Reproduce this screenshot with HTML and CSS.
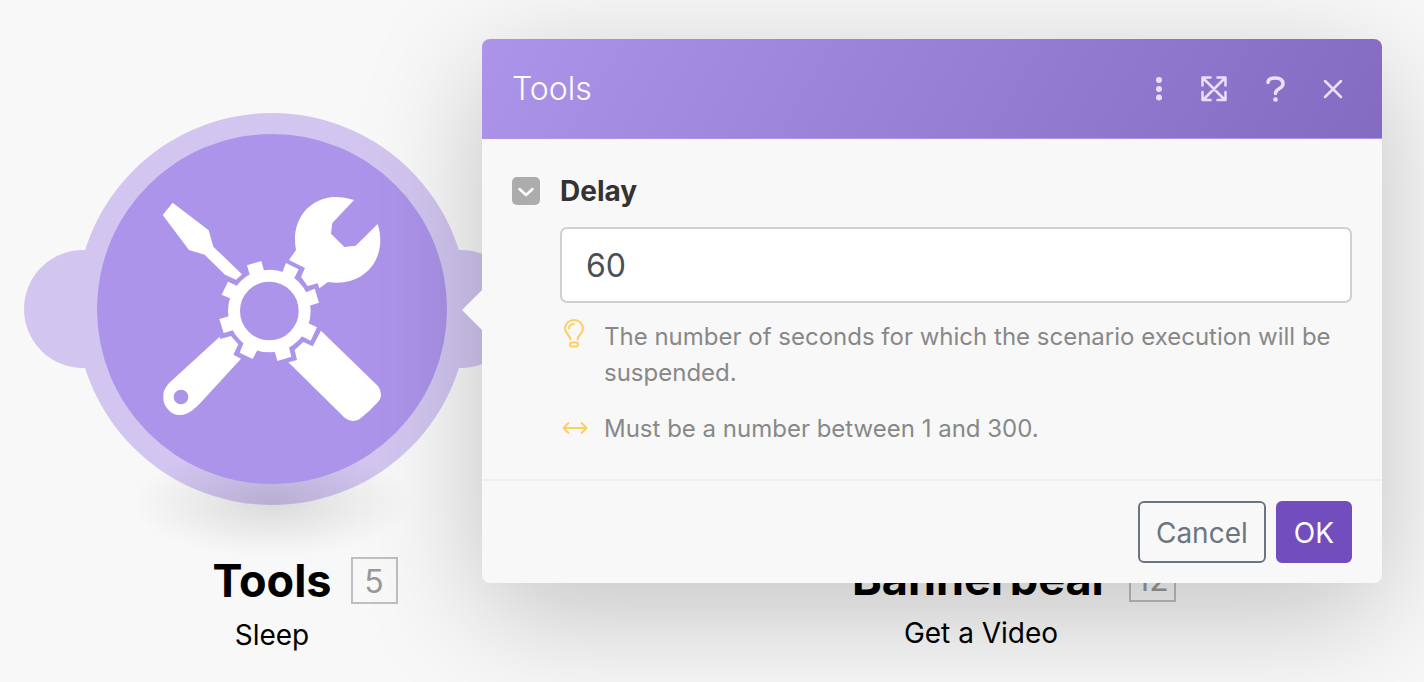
FILE: index.html
```
<!DOCTYPE html>
<html lang="en">
<head>
    <meta charset="UTF-8">
    <meta name="viewport" content="width=device-width, initial-scale=1.0">
    <title>Scenario - Tools</title>
    <link rel="stylesheet" href="styles.css">
</head>
<body>
    <main class="canvas">
        <div class="node node-tools">
            <div class="node-shape">
                <span class="ear ear-left"></span>
                <span class="ear ear-right"></span>
                <div class="node-ring">
                    <span class="node-shadow"></span>
                    <div class="node-circle">
                        <svg class="node-icon" viewBox="6 -3 780 780" aria-hidden="true">
                            <!-- screwdriver -->
                            <path d="M98 68L206 151L220 200L306 283L288 299L255 284L194 224L147 210L68 105Z"/>
                            <!-- wrench -->
                            <path d="M642 60C608 50 577 48 552 56C498 72 465 120 465 177Q465 195 468 210L447 240L495 264L483 290L503 318L533 310L538 325L564 306C600 312 640 306 672 282C716 250 732 190 713 132L647 197L613 201L573 161L577 129Z"/>
                            <!-- spanner handle -->
                            <path fill-rule="evenodd" d="M239 470L241 477L273 468L295 493L280 524L303 536L190 659C165 686 145 705 120 705C104 705 95 700 86 690C74 678 70 666 70 650C70 630 78 618 94 603ZM123 629A22 22 0 1 0 123 673A22 22 0 1 0 123 629Z"/>
                            <!-- screwdriver handle -->
                            <path d="M543 452L713 617Q723 629 723 647Q722 658 714 666Q690 693 658 718Q650 723 638 723Q625 722 614 713L445 547L471 540L464 510L490 486L518 499Z"/>
                            <!-- gear -->
                            <g>
                                <circle class="gear-ring" cx="388" cy="393" r="106"/>
                                <path d="M321 256L364 243L373 275L331 290Z"/>
                                <path d="M438 249L476 268L461 298L425 282Z"/>
                                <path d="M494 338L524 326L537 368L504 379Z"/>
                                <path d="M502 428L531 442L512 482L482 467Z"/>
                                <path d="M446 498L454 530L412 543L403 511Z"/>
                                <path d="M352 511L338 537L299 518L313 484Z"/>
                                <path d="M284 449L251 459L238 417L273 407Z"/>
                                <path d="M273 356L245 344L264 305L292 318Z"/>
                            </g>
                        </svg>
                    </div>
                </div>
            </div>
            <div class="node-title">Tools<span class="badge">5</span></div>
            <div class="node-subtitle">Sleep</div>
        </div>

        <div class="node node-bannerbear">
            <div class="node-shape">
                <div class="node-ring">
                    <div class="node-circle"></div>
                </div>
            </div>
            <div class="node-title">Bannerbear<span class="badge">12</span></div>
            <div class="node-subtitle">Get a Video</div>
        </div>

        <form class="dialog" role="dialog" aria-labelledby="dialog-title">
            <header class="dialog-header">
                <h1 id="dialog-title">Tools</h1>
                <div class="dialog-actions">
                    <button type="button" aria-label="More">
                        <svg width="22" height="28" viewBox="0 0 22 28">
                            <g class="dots">
                                <circle cx="11" cy="5" r="3"/>
                                <circle cx="11" cy="14" r="3"/>
                                <circle cx="11" cy="22.500" r="3"/>
                            </g>
                        </svg>
                    </button>
                    <button type="button" aria-label="Expand">
                        <svg class="stroke-medium" width="28" height="28" viewBox="0 0 28 28">
                            <path d="M3 3L25 25M25 3L3 25M10.500 2.500H2.500V10.500M17.500 2.500H25.500V10.500M10.500 25H2.500V17M17.500 25H25.500V17"/>
                        </svg>
                    </button>
                    <button type="button" aria-label="Help">
                        <svg class="stroke-thick" width="34" height="28" viewBox="0 0 34 28">
                            <path d="M10 7.500C10 4.500 12.500 3 17 3C22 3 25 5 25 9C25 14 17.500 13 17.500 18.500"/>
                            <circle class="dots" cx="17.500" cy="24.500" r="2.300"/>
                        </svg>
                    </button>
                    <button type="button" aria-label="Close">
                        <svg class="stroke-medium" width="22" height="28" viewBox="0 0 22 28">
                            <path d="M3 6L19 22M19 6L3 22"/>
                        </svg>
                    </button>
                </div>
            </header>

            <div class="dialog-body">
                <button type="button" class="toggle" aria-label="Collapse">
                    <svg class="stroke-medium" width="28" height="28" viewBox="0 0 28 28">
                        <path d="M7.500 12L14 18L20.500 12"/>
                    </svg>
                </button>
                <div class="field">
                    <label for="delay">Delay</label>
                    <input type="text" id="delay" value="60">
                    <div class="hint">
                        <svg width="28" height="30" viewBox="0 0 28 30">
                            <path d="M10.500 20.500C10 16 5 14.500 5 9.500C5 4.500 9 1 14 1S23 4.500 23 9.500C23 14.500 18 16 17.500 20.500M9 9.500C9 7 11 5 13.800 5"/>
                            <rect x="10" y="23.500" width="8" height="4" rx="2"/>
                        </svg>
                        <p>The number of seconds for which the scenario execution will be suspended.</p>
                    </div>
                    <div class="hint">
                        <svg width="28" height="30" viewBox="0 0 28 30">
                            <path d="M4 17H26M8.500 12L3.500 17L8.500 22M21.500 12L26.500 17L21.500 22"/>
                        </svg>
                        <p>Must be a number between 1 and 300.</p>
                    </div>
                </div>
            </div>

            <footer class="dialog-footer">
                <button type="button" class="btn btn-outline">Cancel</button>
                <button type="submit" class="btn btn-primary">OK</button>
            </footer>
        </form>
    </main>
</body>
</html>
```

FILE: styles.css
```
* {
    box-sizing: border-box;
}

body {
    margin: 0;
    font-family: Inter, "Liberation Sans", sans-serif;
    background-color: #f8f8f8;
    color: #000;
}

h1,
p {
    margin: 0;
}

button {
    padding: 0;
    border: none;
    background: none;
    font-family: inherit;
    cursor: pointer;
}

svg {
    display: block;
}

.canvas {
    position: relative;
    min-height: 100vh;
    overflow: hidden;
}

/* scenario nodes */
.node {
    position: absolute;
    width: 392px;
    text-align: center;
}

.node-tools {
    left: 76px;
    top: 113px;
}

.node-bannerbear {
    left: 785px;
    top: 111px;
}

.node-shape {
    position: relative;
    margin-bottom: 48px;
}

.node-ring {
    position: relative;
    padding: 21px;
    border-radius: 50%;
    background-color: #d2c6f0;
}

.node-circle {
    position: relative;
    display: flex;
    align-items: center;
    justify-content: center;
    height: 350px;
    border-radius: 50%;
    background-color: #ac94ea;
}

.node-icon {
    width: 260px;
    height: 260px;
    fill: #fff;
}

.gear-ring {
    fill: none;
    stroke: #fff;
    stroke-width: 36;
}

.ear {
    position: absolute;
    top: 137px;
    width: 118px;
    height: 118px;
    border-radius: 50%;
    background-color: #d2c6f0;
}

.ear-left {
    left: -52px;
}

.ear-right {
    right: -52px;
}

.node-shadow {
    position: absolute;
    left: 56px;
    right: 56px;
    bottom: -52px;
    height: 110px;
    background: radial-gradient(closest-side, rgba(0, 0, 0, 0.12), rgba(0, 0, 0, 0.06) 50%, transparent);
}

.node-title {
    position: relative;
    display: inline-block;
    font-size: 45px;
    font-weight: 700;
    line-height: 56px;
}

.badge {
    position: absolute;
    left: 100%;
    top: 4px;
    width: 47px;
    height: 47px;
    margin-left: 19px;
    border: 2px solid #bfbfbf;
    color: #999;
    font-size: 32px;
    font-weight: 400;
    line-height: 45px;
}

.node-subtitle {
    font-size: 28px;
    line-height: 32px;
    margin-top: 10px;
}

/* settings dialog */
.dialog {
    position: absolute;
    left: 482px;
    right: 42px;
    top: 39px;
    border-radius: 8px;
    background-color: #f8f8f8;
    box-shadow: 0 30px 120px rgba(0, 0, 0, 0.22);
}

.dialog::before {
    content: "";
    position: absolute;
    left: -20px;
    top: 251px;
    border: 20px solid transparent;
    border-left: none;
    border-right-color: #f8f8f8;
}

.dialog-header {
    display: flex;
    align-items: center;
    justify-content: space-between;
    height: 100px;
    padding: 0 38px 0 30px;
    border-bottom: 1px solid #ac94ea;
    border-radius: 8px 8px 0 0;
    background: linear-gradient(120deg, #ac94ea, #846bc2);
    color: #fff;
}

.dialog-header h1 {
    font-size: 32px;
    font-weight: 300;
}

.dialog-actions {
    display: flex;
    gap: 30px;
    color: #e8e0fa;
}

.dialog-actions button {
    color: inherit;
}

.dialog svg {
    fill: none;
    stroke: currentColor;
    stroke-width: 2;
    stroke-linecap: round;
    stroke-linejoin: round;
}

.dialog .stroke-medium {
    stroke-width: 2.5;
}

.dialog .stroke-thick {
    stroke-width: 3.5;
}

.dots {
    fill: currentColor;
    stroke: none;
}

.dialog-body {
    display: flex;
    gap: 20px;
    padding: 34px 30px 32px;
}

.toggle {
    flex: none;
    width: 28px;
    height: 28px;
    margin-top: 4px;
    border-radius: 5px;
    background-color: #acacac;
    color: #fff;
}

.field {
    flex: 1;
}

.field label {
    display: block;
    margin-bottom: 18px;
    color: #333;
    font-size: 28px;
    font-weight: 700;
    line-height: 36px;
}

.field input {
    display: block;
    width: 100%;
    height: 76px;
    padding: 0 24px;
    border: 2px solid #d0d0d0;
    border-radius: 7px;
    background-color: #fff;
    color: #495057;
    font-family: inherit;
    font-size: 32px;
}

.hint {
    display: flex;
    gap: 16px;
    margin-top: 16px;
    color: #888;
    font-size: 24px;
    line-height: 36px;
}

.hint + .hint {
    margin-top: 20px;
}

.hint svg {
    flex: none;
    color: #fdce62;
}

.dialog-footer {
    display: flex;
    justify-content: flex-end;
    gap: 10px;
    padding: 20px 30px;
    border-top: 2px solid #eee;
}

.btn {
    height: 62px;
    padding: 2px 16px 0;
    border: 2px solid;
    border-radius: 6px;
    font-size: 28px;
}

.btn-outline {
    border-color: #6c757d;
    color: #6c757d;
}

.btn-primary {
    border-color: #724dbe;
    background-color: #724dbe;
    color: #fff;
}
```
